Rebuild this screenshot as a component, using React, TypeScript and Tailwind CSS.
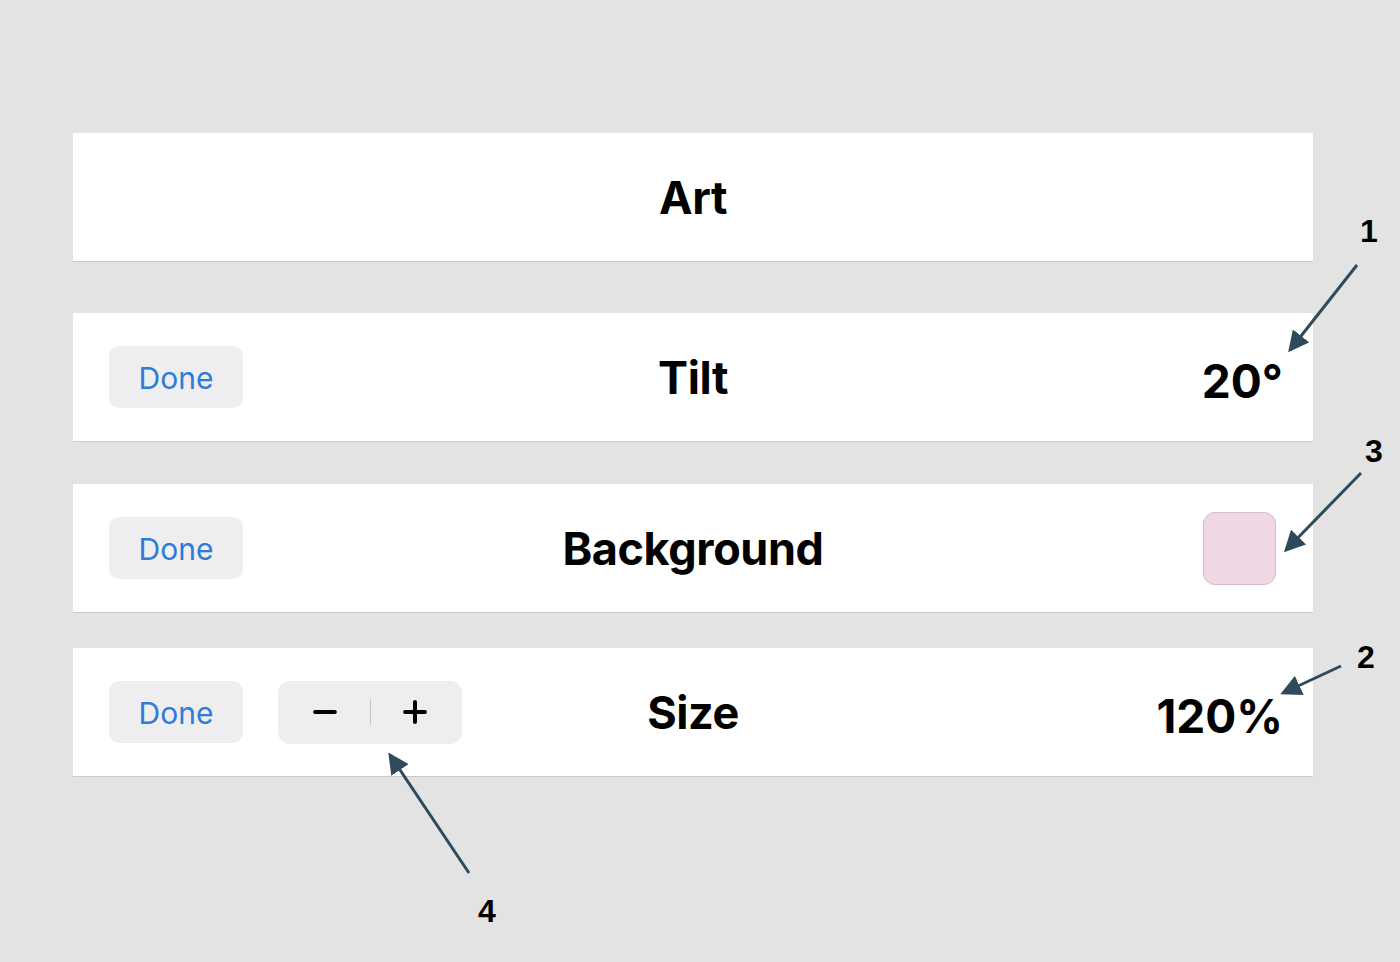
import { Minus, Plus } from 'lucide-react';
import type { ReactNode } from 'react';

const titleFont = { fontFamily: 'Inter, "Noto Sans", sans-serif' };

function DoneButton() {
  return (
    <button className="flex items-center justify-center w-[134px] h-[62px] pt-[3px] rounded-[10px] bg-[#eeeef0] text-[30px] text-[#2f7bd8] font-normal">
      Done
    </button>
  );
}

interface RowProps {
  title: string;
  left?: ReactNode;
  right?: ReactNode;
  className?: string;
}

function Row({ title, left, right, className = '' }: RowProps) {
  return (
    <section
      className={`flex items-center w-[1240px] h-[129px] bg-white border-b border-[#c9c9c9] px-[36px] ${className}`}
    >
      <div className="flex-1 flex items-center gap-[35px]">{left}</div>
      <h2 className="text-[45px] font-bold text-black tracking-[-0.4px] pt-[2px]" style={titleFont}>
        {title}
      </h2>
      <div className="flex-1 flex items-center justify-end">{right}</div>
    </section>
  );
}

// numbered call-outs drawn over the panels
const arrows = [
  { x1: 1357, y1: 265, x2: 1290, y2: 350 },
  { x1: 1361, y1: 473, x2: 1286, y2: 550 },
  { x1: 1341, y1: 666, x2: 1283, y2: 693 },
  { x1: 469, y1: 873, x2: 390, y2: 755 },
];

const labels = [
  { n: '1', x: 1360, y: 215 },
  { n: '3', x: 1365, y: 435 },
  { n: '2', x: 1357, y: 641 },
  { n: '4', x: 478, y: 895 },
];

export default function App() {
  return (
    <div
      className="relative min-h-screen w-full bg-[#e3e3e3] pt-[133px] pl-[73px]"
      style={titleFont}
    >
      <Row title="Art" />

      <Row
        className="mt-[51px]"
        title="Tilt"
        left={<DoneButton />}
        right={<span className="text-[46px] font-bold text-black pt-[8px] -mr-[6px]">20°</span>}
      />

      <Row
        className="mt-[42px]"
        title="Background"
        left={<DoneButton />}
        right={
          <div className="w-[73px] h-[73px] mr-[1px] rounded-[12px] bg-[#efd8e3] border border-[#d8b9c8]" />
        }
      />

      <Row
        className="mt-[35px]"
        title="Size"
        left={
          <>
            <DoneButton />
            <div className="flex items-center w-[184px] h-[63px] rounded-[12px] bg-[#eeeef0]">
              <span className="flex-1 flex justify-center pl-[2px]">
                <Minus size={34} strokeWidth={2.8} className="text-black" />
              </span>
              <span className="w-px h-[26px] bg-[#c6c6c8]" />
              <span className="flex-1 flex justify-center pr-[2px]">
                <Plus size={34} strokeWidth={2.8} className="text-black" />
              </span>
            </div>
          </>
        }
        right={<span className="text-[46px] font-bold text-black pt-[8px] -mr-[6px]">120%</span>}
      />

      <svg className="absolute inset-0 pointer-events-none" width="1400" height="962">
        <defs>
          <marker id="head" markerWidth="7" markerHeight="7" refX="6" refY="3.5" orient="auto">
            <path d="M0,0 L7,3.5 L0,7 Z" fill="#2e4b5b" />
          </marker>
        </defs>
        {arrows.map((a, i) => (
          <line
            key={i}
            x1={a.x1}
            y1={a.y1}
            x2={a.x2}
            y2={a.y2}
            stroke="#2e4b5b"
            strokeWidth="3"
            markerEnd="url(#head)"
          />
        ))}
      </svg>

      {labels.map((l) => (
        <span
          key={l.n}
          className="absolute text-[32px] leading-none font-bold text-black"
          style={{ left: l.x, top: l.y, fontFamily: '"Liberation Sans", Arial, sans-serif' }}
        >
          {l.n}
        </span>
      ))}
    </div>
  );
}
